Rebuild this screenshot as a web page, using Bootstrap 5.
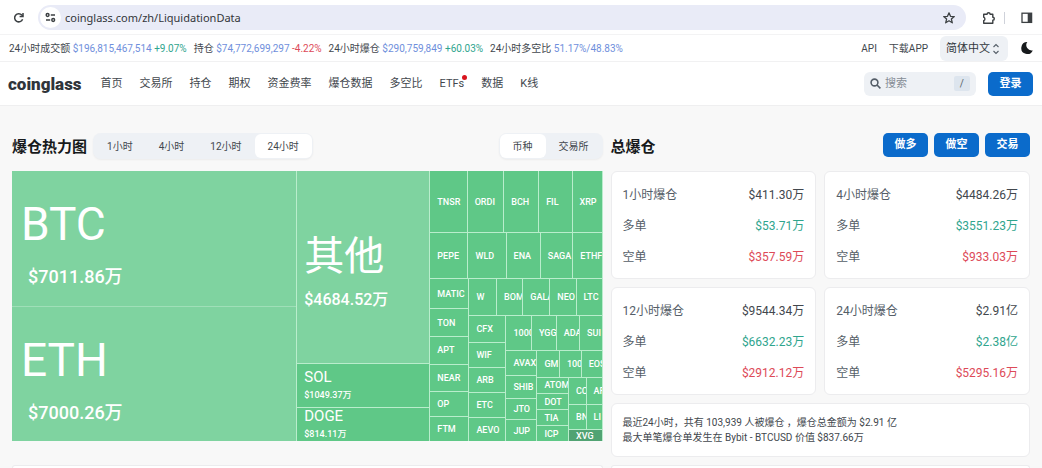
<!DOCTYPE html>
<html lang="zh-CN">
<head>
<meta charset="utf-8">
<meta name="viewport" content="width=device-width, initial-scale=1">
<title>爆仓数据 - coinglass</title>
<link href="https://cdn.jsdelivr.net/npm/bootstrap@5.3.0/dist/css/bootstrap.min.css" rel="stylesheet">
<style>
  body { font-family: Roboto, "Noto Sans CJK SC", sans-serif; font-size: 10px; line-height: 15px; color: #42474d; background: #f8f8f8; }
  a { color: inherit; text-decoration: none; }
  button { font-family: inherit; }
  svg { display: block; flex: none; }

  /* browser toolbar */
  .toolbar { padding: 5px 9px 4px 10px; color: #3c4043; border-bottom: 1px solid #f3f3f4; }
  .toolbar button, .plain { background: none; border: 0; padding: 0; color: inherit; }
  .omnibox { background: #e9ebf7; border-radius: 13px; height: 25px; padding: 0 10px 0 2px; margin-left: 10px; }
  .omnibox input { border: 0; background: none; outline: 0; font: 11px/16px "Noto Sans", sans-serif; color: #33363a; min-width: 0; padding: 0; }
  .site-info { width: 21px; height: 21px; background: #fff !important; border-radius: 50%; }
  .sep { width: 1px; height: 12px; background: #cfd2da; }

  /* market figures */
  .ticker { padding: 0 8px 0 9px; height: 27px; border-bottom: 1px solid #f1f1f2; }
  .figures { gap: 7px; }
  .c-link { color: #6f8fdc; } .c-up { color: #2fa58e; } .c-down { color: #dd4a58; }
  .lang { position: relative; }
  .lang select { appearance: none; font: inherit; font-size: 11px; color: #32383e; background: #eef1f5; border: 0; border-radius: 6px; height: 25px; width: 68px; padding: 0 6px; }
  .lang svg { position: absolute; right: 8px; top: 7px; pointer-events: none; }

  /* site navigation */
  .sitebar { padding: 0 9px 0 8px; min-height: 44px; border-bottom: 1px solid #efeff0; font-size: 11px; }
  .brand { font-size: 17px; font-weight: 900; line-height: 20px; color: #30343a; }
  .menu { gap: 17px; margin-left: 19px; }
  .dot { position: absolute; width: 5px; height: 5px; border-radius: 50%; background: #d8141e; right: -3px; top: -1px; }
  .finder { background: #eef1f5; border-radius: 6px; height: 24px; width: 112px; padding: 0 6px; color: #555e68; }
  .finder input { border: 0; background: none; outline: 0; min-width: 0; padding: 0; font: inherit; }
  .finder input::placeholder { color: #868d96; opacity: 1; }
  .finder kbd { font: inherit; font-size: 10px; background: #dde5ee; color: #555e68; padding: 0 6px; border-radius: 2px; }
  .act { background: #0b6bcb; color: #fff; border: 0; border-radius: 5px; width: 45px; height: 24px; padding: 0; font-size: 11px; font-weight: 700; line-height: 24px; }
  .act:hover { background: #185ea5; color: #fff; }

  /* headings and switches */
  main { padding-top: 27px; }
  .heads { height: 26px; margin-bottom: 12px; }
  h2 { font-size: 15px; line-height: 28px; font-weight: 700; color: #171a1c; margin: 0; }
  .switch { background: #eef1f5; border-radius: 8px; padding: 1px; box-shadow: 0 1px 2px #0000000d; }
  .period { margin-left: 6px; }
  .switch button { border: 0; background: none; height: 24px; padding: 0 13px; border-radius: 6px; color: #42474d; }
  .switch .on { background: #fff; }

  /* treemap: --s is each block's share of its parent */
  .tmap { margin-bottom: 16px; color: #fff; font-size: 9px; line-height: 12px; font-weight: 500; }
  .tmap, .tmap .h, .tmap .v { display: flex; gap: 1px; background: #b9edcc; overflow: hidden; min-width: 0; min-height: 0; }
  .tmap .v { flex-direction: column; }
  .tmap .h, .tmap .v, .tmap .t { flex: var(--s) 1 0; }
  .tmap .t { display: flex; flex-direction: column; justify-content: center; background: #5fc887; padding-left: 7px; min-width: 0; min-height: 0; overflow: hidden; white-space: nowrap; }
  .tmap .lite { background: #7fd3a0; padding-top: 14px; }
  .tmap .v.pale { background: #9fdfb8; }
  .tmap .pale .t { padding: 18px 0 0 9px; }
  .tmap .deep { background: #51a373; }
  .xl { font-size: 46px; line-height: 60px; font-weight: 400; }
  .xl + span { font-size: 18px; line-height: 46px; padding-left: 7px; }
  .lg { font-size: 40px; line-height: 52px; font-weight: 400; }
  .lg + span { font-size: 16px; line-height: 34px; }
  .md { font-size: 15px; line-height: 20px; font-weight: 400; }
  .md + span { font-size: 9px; line-height: 17px; }

  /* figure cards */
  .panel { background: #fff; border: 1px solid #ececee; border-radius: 6px; }
  .stat { padding: 8px 11px 5px; font-size: 12px; line-height: 31px; color: #555e68; }
  .stat dt { font-weight: 400; } .stat dd { margin: 0; color: #42474d; }
  .stat dd.c-up { color: #2fa58e; } .stat dd.c-down { color: #dd4a58; }
  .note { padding: 11px; }
  .next { border-bottom: 0; border-radius: 6px 6px 0 0; }
</style>
</head>
<body class="min-vh-100 d-flex flex-column">

<div class="toolbar bg-white d-flex align-items-center">
  <button type="button" aria-label="重新加载">
    <svg width="18" height="18" viewBox="0 0 18 18" fill="none" stroke="currentColor" stroke-width="1.5"><path d="M12.6 10.2A4.1 4.1 0 1 1 11.8 6l1 1.1"/><path d="M13 4v3.4H9.6"/></svg>
  </button>
  <div class="omnibox d-flex align-items-center flex-fill me-3">
    <button type="button" class="site-info d-flex align-items-center justify-content-center" aria-label="网站信息">
      <svg width="11" height="11" viewBox="0 0 11 11" fill="none" stroke="currentColor" stroke-width="1.5"><circle cx="2.6" cy="3" r="1.4"/><path d="M5.8 3H10M1 8h4.2"/><circle cx="8.2" cy="8" r="1.4"/></svg>
    </button>
    <input class="flex-fill ms-1" type="text" aria-label="地址" value="coinglass.com/zh/LiquidationData">
    <button type="button" aria-label="收藏">
      <svg width="14" height="14" viewBox="0 0 14 14" fill="none" stroke="currentColor" stroke-width="1.3" stroke-linejoin="round"><path d="M7 1.8l1.5 3.5 3.8.3-2.9 2.5.9 3.7L7 9.8l-3.3 2 .9-3.7-2.9-2.5 3.8-.3z"/></svg>
    </button>
  </div>
  <button type="button" aria-label="扩展程序">
    <svg width="14" height="14" viewBox="0 0 14 14" fill="none" stroke="currentColor" stroke-width="1.4" stroke-linejoin="round"><path d="M1.7 3.2h3.4a1.5 1.5 0 0 1 3 0h2.7v3.1a1.5 1.5 0 0 1 0 3v3H1.7V9.6a1.8 1.8 0 0 0 0-3.4z"/></svg>
  </button>
  <span class="sep ms-2 me-3"></span>
  <button type="button" aria-label="侧边栏">
    <svg width="12" height="12" viewBox="0 0 12 12"><rect x="1" y="1.2" width="9.6" height="9.2" fill="none" stroke="currentColor" stroke-width="1.3"/><path d="M6.7 1h4v9.6h-4z" fill="currentColor"/></svg>
  </button>
</div>

<div class="ticker bg-white d-flex align-items-center">
  <div class="figures d-flex text-nowrap">
    <span>24小时成交额 <a href="#" class="c-link">$196,815,467,514</a> <span class="c-up">+9.07%</span></span>
    <span>持仓 <a href="#" class="c-link">$74,772,699,297</a> <span class="c-down">-4.22%</span></span>
    <span>24小时爆仓 <a href="#" class="c-link">$290,759,849</a> <span class="c-up">+60.03%</span></span>
    <span>24小时多空比 <a href="#" class="c-link">51.17%/48.83%</a></span>
  </div>
  <div class="d-flex align-items-center ms-auto gap-2 text-nowrap">
    <a href="#" class="me-1">API</a>
    <a href="#" class="me-1">下载APP</a>
    <div class="lang">
      <select aria-label="语言"><option>简体中文</option><option>English</option></select>
      <svg width="8" height="12" viewBox="0 0 8 12" fill="none" stroke="#555e68" stroke-width="1.1"><path d="M1.5 4L4 1.5 6.5 4M1.5 8L4 10.5 6.5 8"/></svg>
    </div>
    <button type="button" class="plain ms-1" aria-label="深色模式">
      <svg width="14" height="14" viewBox="0 0 14 14"><path d="M7.3 1A6 6 0 1 0 12.8 9.4 5.4 5.4 0 0 1 7.3 1z" fill="#171a1c"/></svg>
    </button>
  </div>
</div>

<nav class="sitebar bg-white d-flex align-items-center">
  <a href="#" class="brand">coinglass</a>
  <div class="menu d-flex text-nowrap">
    <a href="#">首页</a><a href="#">交易所</a><a href="#">持仓</a><a href="#">期权</a><a href="#">资金费率</a><a href="#">爆仓数据</a><a href="#">多空比</a>
    <a href="#" class="position-relative">ETFs<span class="dot"></span></a><a href="#">数据</a><a href="#">K线</a>
  </div>
  <label class="finder d-flex align-items-center ms-auto me-2">
    <svg width="11" height="11" viewBox="0 0 11 11" fill="none" stroke="currentColor" stroke-width="1.6"><circle cx="4.5" cy="4.5" r="3.4"/><path d="M7 7l3.4 3.4"/></svg>
    <input class="flex-fill ms-1" type="search" placeholder="搜索" aria-label="搜索">
    <kbd>/</kbd>
  </label>
  <button type="button" class="act ms-1">登录</button>
</nav>

<main class="container-fluid flex-fill d-flex flex-column">
  <div class="row g-2">
    <section class="col-7 d-flex flex-column">
      <div class="heads d-flex align-items-start">
        <h2>爆仓热力图</h2>
        <div class="switch period d-flex">
          <button type="button">1小时</button><button type="button">4小时</button><button type="button">12小时</button><button type="button" class="on">24小时</button>
        </div>
        <div class="switch d-flex ms-auto">
          <button type="button" class="on">币种</button><button type="button">交易所</button>
        </div>
      </div>

      <div class="tmap flex-fill">
        <div class="v pale" style="--s:284">
          <div class="t lite" style="--s:1"><span class="xl">BTC</span><span>$7011.86万</span></div>
          <div class="t lite" style="--s:1"><span class="xl">ETH</span><span>$7000.26万</span></div>
        </div>
        <div class="v" style="--s:132">
          <div class="t lite" style="--s:178"><span class="lg">其他</span><span>$4684.52万</span></div>
          <div class="t" style="--s:43"><span class="md">SOL</span><span>$1049.37万</span></div>
          <div class="t" style="--s:33"><span class="md">DOGE</span><span>$814.11万</span></div>
        </div>
        <div class="v" style="--s:172">
          <div class="h" style="--s:61">
            <div class="t" style="--s:37">TNSR</div><div class="t" style="--s:36">ORDI</div><div class="t" style="--s:34">BCH</div><div class="t" style="--s:32">FIL</div><div class="t" style="--s:29">XRP</div>
          </div>
          <div class="h" style="--s:45">
            <div class="t" style="--s:38">PEPE</div><div class="t" style="--s:38">WLD</div><div class="t" style="--s:33">ENA</div><div class="t" style="--s:31">SAGA</div><div class="t" style="--s:28">ETHF</div>
          </div>
          <div class="h" style="--s:162">
            <div class="v" style="--s:38">
              <div class="t" style="--s:29">MATIC</div><div class="t" style="--s:27">TON</div><div class="t" style="--s:26">APT</div><div class="t" style="--s:26">NEAR</div><div class="t" style="--s:24">OP</div><div class="t" style="--s:24">FTM</div>
            </div>
            <div class="v" style="--s:133">
              <div class="h" style="--s:36">
                <div class="t" style="--s:27">W</div><div class="t" style="--s:25">BOM</div><div class="t" style="--s:26">GALA</div><div class="t" style="--s:25">NEO</div><div class="t" style="--s:26">LTC</div>
              </div>
              <div class="h" style="--s:125">
                <div class="v" style="--s:36">
                  <div class="t" style="--s:26">CFX</div><div class="t" style="--s:24">WIF</div><div class="t" style="--s:25">ARB</div><div class="t" style="--s:24">ETC</div><div class="t" style="--s:23">AEVO</div>
                </div>
                <div class="v" style="--s:96">
                  <div class="h" style="--s:34">
                    <div class="t" style="--s:25">1000</div><div class="t" style="--s:24">YGG</div><div class="t" style="--s:22">ADA</div><div class="t" style="--s:22">SUI</div>
                  </div>
                  <div class="h" style="--s:91">
                    <div class="v" style="--s:30">
                      <div class="t" style="--s:24">AVAX</div><div class="t" style="--s:23">SHIB</div><div class="t" style="--s:20">JTO</div><div class="t" style="--s:21">JUP</div>
                    </div>
                    <div class="v" style="--s:65">
                      <div class="h" style="--s:26">
                        <div class="t" style="--s:22">GM</div><div class="t" style="--s:21">100</div><div class="t" style="--s:21">EOS</div>
                      </div>
                      <div class="h" style="--s:64">
                        <div class="v" style="--s:31">
                          <div class="t" style="--s:16">ATOM</div><div class="t" style="--s:15">DOT</div><div class="t" style="--s:15">TIA</div><div class="t" style="--s:15">ICP</div>
                        </div>
                        <div class="v" style="--s:34">
                          <div class="h" style="--s:27"><div class="t" style="--s:17">CC</div><div class="t" style="--s:16">AR</div></div>
                          <div class="h" style="--s:24"><div class="t" style="--s:17">BN</div><div class="t" style="--s:16">LI</div></div>
                          <div class="t deep" style="--s:11">XVG</div>
                        </div>
                      </div>
                    </div>
                  </div>
                </div>
              </div>
            </div>
          </div>
        </div>
      </div>
    </section>

    <section class="col-5">
      <div class="heads d-flex align-items-start">
        <h2 class="me-auto">总爆仓</h2>
        <div class="d-flex" style="gap:6px">
          <button type="button" class="act">做多</button><button type="button" class="act">做空</button><button type="button" class="act">交易</button>
        </div>
      </div>
      <div class="row g-2">
        <div class="col-6"><dl class="panel stat mb-0">
          <div class="d-flex justify-content-between"><dt>1小时爆仓</dt><dd>$411.30万</dd></div>
          <div class="d-flex justify-content-between"><dt>多单</dt><dd class="c-up">$53.71万</dd></div>
          <div class="d-flex justify-content-between"><dt>空单</dt><dd class="c-down">$357.59万</dd></div>
        </dl></div>
        <div class="col-6"><dl class="panel stat mb-0">
          <div class="d-flex justify-content-between"><dt>4小时爆仓</dt><dd>$4484.26万</dd></div>
          <div class="d-flex justify-content-between"><dt>多单</dt><dd class="c-up">$3551.23万</dd></div>
          <div class="d-flex justify-content-between"><dt>空单</dt><dd class="c-down">$933.03万</dd></div>
        </dl></div>
        <div class="col-6"><dl class="panel stat mb-0">
          <div class="d-flex justify-content-between"><dt>12小时爆仓</dt><dd>$9544.34万</dd></div>
          <div class="d-flex justify-content-between"><dt>多单</dt><dd class="c-up">$6632.23万</dd></div>
          <div class="d-flex justify-content-between"><dt>空单</dt><dd class="c-down">$2912.12万</dd></div>
        </dl></div>
        <div class="col-6"><dl class="panel stat mb-0">
          <div class="d-flex justify-content-between"><dt>24小时爆仓</dt><dd>$2.91亿</dd></div>
          <div class="d-flex justify-content-between"><dt>多单</dt><dd class="c-up">$2.38亿</dd></div>
          <div class="d-flex justify-content-between"><dt>空单</dt><dd class="c-down">$5295.16万</dd></div>
        </dl></div>
        <div class="col-12"><div class="panel note">
          最近24小时，共有 103,939 人被爆仓 ，爆仓总金额为 $2.91 亿<br>
          最大单笔爆仓单发生在 Bybit - BTCUSD 价值 $837.66万
        </div></div>
      </div>
    </section>
  </div>
  <div class="row g-2 mt-0 flex-fill">
    <div class="col-7 d-flex"><div class="panel next flex-fill"></div></div>
    <div class="col-5 d-flex"><div class="panel next flex-fill"></div></div>
  </div>
</main>

<script src="https://cdn.jsdelivr.net/npm/bootstrap@5.3.0/dist/js/bootstrap.bundle.min.js"></script>
</body>
</html>
